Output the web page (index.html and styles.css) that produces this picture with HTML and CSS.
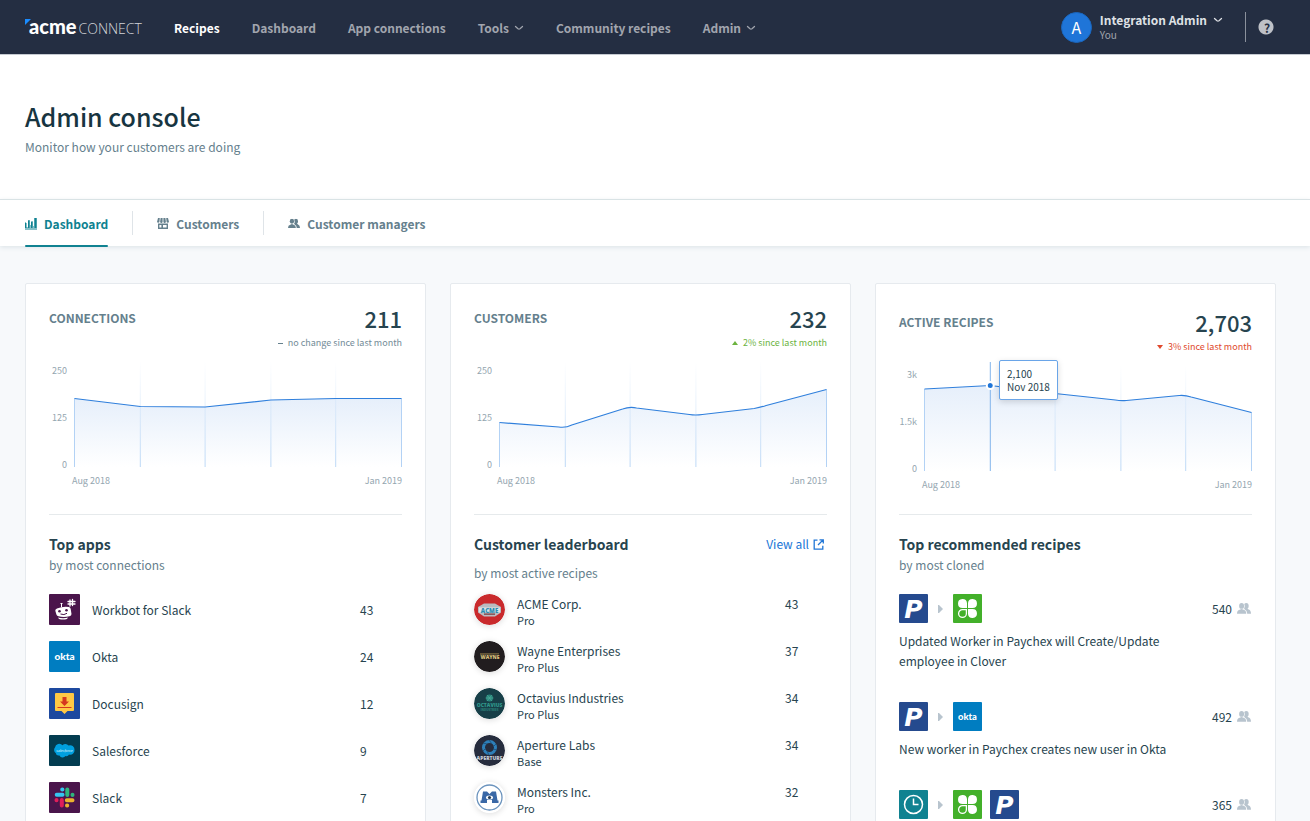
FILE: index.html
```html
<!DOCTYPE html>
<html lang="en">
<head>
<meta charset="utf-8">
<title>Admin console</title>
<link rel="stylesheet" href="styles.css">
</head>
<body>
<svg class="defs" aria-hidden="true">
  <defs>
    <linearGradient id="area" x1="0" y1="0" x2="0" y2="1">
      <stop offset="0" stop-color="#e6effb"/>
      <stop offset="1" stop-color="#ffffff"/>
    </linearGradient>
    <linearGradient id="grid" gradientUnits="userSpaceOnUse" x1="0" y1="4" x2="0" y2="110">
      <stop offset="0" stop-color="#c9dff7" stop-opacity="0"/>
      <stop offset="1" stop-color="#bcd8f6"/>
    </linearGradient>
    <symbol id="chevron" viewBox="0 0 10 6"><path d="M1.500 1.500 4 3.700q1 .7 2 0L8.500 1.500" fill="none" stroke="currentColor" stroke-width="1.3" stroke-linecap="round"/></symbol>
    <symbol id="people" viewBox="0 0 14 11">
      <ellipse cx="4.6" cy="2.9" rx="2.5" ry="2.9"/><path d="M0 10.8q0-3.4 2.6-4l2-.9 2 .9q2.600.6 2.600 4z"/>
      <path d="M7.200.9q.9-.9 2-.9 2.500 0 2.500 2.900 0 2-1.200 2.800l1.200.9Q14 7.400 14 10.800h-3.800q0-3.200-2.700-4.500L7.100 5.700q1.600-2.400.1-4.800z"/>
    </symbol>
    <symbol id="okta" viewBox="0 0 31 31">
      <rect width="31" height="31" rx="1" fill="#007dc1"/>
      <text x="15.500" y="19" class="okta-text">okta</text>
    </symbol>
    <symbol id="paychex" viewBox="0 0 29 29">
      <rect width="29" height="29" rx="1" fill="#254a8e"/>
      <text x="14.500" y="23.500" class="paychex-text">P</text>
    </symbol>
    <symbol id="clover" viewBox="0 0 29 29">
      <rect width="29" height="29" rx="1" fill="#43b02a"/>
      <g fill="#fff">
        <path d="M14 14V9a4.500 4.500 0 1 0-4.500 5z"/>
        <path d="M15 14V9a4.500 4.500 0 1 1 4.500 5z"/>
        <path d="M15 15v5a4.500 4.500 0 1 0 4.500-5z"/>
      </g>
      <path d="M13.400 15.600V19.500a3.900 3.900 0 1 1-3.900-3.900z" fill="none" stroke="#fff" stroke-width="1.300"/>
    </symbol>
    <symbol id="clock" viewBox="0 0 29 29">
      <rect width="29" height="29" rx="1" fill="#108291"/>
      <circle cx="14.500" cy="14.500" r="9" fill="none" stroke="#fff" stroke-width="1.500"/>
      <path d="M14.500 8.500v6h5" fill="none" stroke="#fff" stroke-width="1.500"/>
    </symbol>
    <symbol id="arrow" viewBox="0 0 5 8"><path d="M0 0h1l4 4-4 4H0z" fill="#b8c4ce"/></symbol>
  </defs>
</svg>

<header class="topbar">
  <a class="logo" href="#">
    <svg class="logo-mark" viewBox="0 0 6 6"><path d="M0 0h6L3.800 2.200 0 6z" fill="#1a8cff"/></svg>
    <span class="logo-acme">acme</span><span class="logo-connect">CONNECT</span>
  </a>
  <nav class="nav">
    <a class="nav-link current" href="#">Recipes</a>
    <a class="nav-link" href="#">Dashboard</a>
    <a class="nav-link" href="#">App connections</a>
    <a class="nav-link" href="#">Tools <svg class="chevron"><use href="#chevron"/></svg></a>
    <a class="nav-link" href="#">Community recipes</a>
    <a class="nav-link" href="#">Admin <svg class="chevron"><use href="#chevron"/></svg></a>
  </nav>
  <button class="account" type="button">
    <span class="avatar">A</span>
    <span class="account-text">
      <span class="account-name">Integration Admin <svg class="chevron"><use href="#chevron"/></svg></span>
      <span class="account-sub">You</span>
    </span>
  </button>
  <button class="help" type="button" aria-label="Help">?</button>
</header>

<section class="intro">
  <h1 class="page-title">Admin console</h1>
  <p class="page-sub">Monitor how your customers are doing</p>
</section>

<nav class="tabs">
  <a class="tab active" href="#">
    <svg class="tab-icon" viewBox="0 0 12 12" fill="currentColor"><path opacity=".5" d="M0 4h1v5h2V2h2v5h1V3h2v5h1V0h3v12H0z"/><path d="M0 5h1.500v5H0zM3 2.500h1.500V10H3zM6 4h1.500v6H6zM9.500 0H11.500v10h-2z"/></svg>
    Dashboard
  </a>
  <a class="tab" href="#">
    <svg class="tab-icon" viewBox="0 0 12 12" fill="currentColor"><path d="M1 0h1.800L2.400 4a1.300 1.300 0 0 1-2.400 0zM3.600 0h2v4a1.300 1.300 0 0 1-2.500 0zM6.400 0h2L8.900 4a1.300 1.300 0 0 1-2.500 0zM9.200 0H11l1 4a1.300 1.300 0 0 1-2.400 0z"/><path fill-rule="evenodd" d="M1 5.500h10V11H1zM2.400 7v2.500h2V7zM6 7v2.500h3.600V7z"/></svg>
    Customers
  </a>
  <a class="tab" href="#">
    <svg class="tab-icon" fill="currentColor" viewBox="0 0 14 12"><use href="#people" width="14" height="11"/></svg>
    Customer managers
  </a>
</nav>

<main class="cards">
  <section class="card">
    <header class="metric">
      <h2 class="metric-name">CONNECTIONS</h2>
      <div class="metric-value">
        <strong class="metric-number">211</strong>
        <span class="trend"><span class="dash"></span>no change since last month</span>
      </div>
    </header>
    <div class="chart">
      <div class="y-axis"><span>250</span><span>125</span><span>0</span></div>
      <svg class="plot" viewBox="0 0 329 110" preserveAspectRatio="none">
        <path d="M.5 41.500 66.500 49.500 131.500 50 197.500 43 262.500 41.500H328.500V110H.5z" fill="url(#area)"/>
        <path class="gridline" d="M66.500 4V110M131.500 4V110M197.500 4V110M262.500 4V110"/>
        <path class="edge" d="M.5 41.500V110M328.500 41.500V110"/>
        <path class="series" d="M.5 41.500 66.500 49.500 131.500 50 197.500 43 262.500 41.500H328.500"/>
      </svg>
      <div class="x-axis"><span>Aug 2018</span><span>Jan 2019</span></div>
    </div>
    <div class="list-head"><h3 class="list-title">Top apps</h3></div>
    <p class="list-sub">by most connections</p>
    <ul class="rows">
      <li class="row">
        <svg class="app-icon" viewBox="0 0 31 31">
          <rect width="31" height="31" rx="1" fill="#4a154b"/>
          <path d="M21 6v6M23.500 5.500v6M19 7.500h7M19 10h7" stroke="#fff" stroke-width="1.300" stroke-linecap="round"/>
          <path d="M12.500 13V9.500M11.500 9.500h2" stroke="#fff"/>
          <path d="M8 14.500q6-2.500 12-1.500 1.500.3 1.700 2l.8 5q0 1.800-2 2.200-5.500 1.300-11 .1-1.500-.2-2-1.500l-1.200-4q-.2-1.600 1.700-2.300zM9 23.500q5 1.300 10 0l-1 1.500q-4 1-8 0z" fill="#fff"/>
          <circle cx="10.500" cy="17.200" r="1.300" fill="#4a154b"/><circle cx="17.500" cy="16.200" r="1.300" fill="#4a154b"/>
          <path d="M11.500 20q3.500 1.500 6.500-.7" fill="none" stroke="#4a154b"/>
        </svg>
        <span class="row-name">Workbot for Slack</span><span class="row-count">43</span>
      </li>
      <li class="row">
        <svg class="app-icon"><use href="#okta"/></svg>
        <span class="row-name">Okta</span><span class="row-count">24</span>
      </li>
      <li class="row">
        <svg class="app-icon" viewBox="0 0 31 31">
          <rect width="31" height="31" rx="1" fill="#1d499f"/>
          <path d="M7 5h17q1 0 1 1v16q0 1-1 1h-5.500l-3 3-3-3H7q-1 0-1-1V6q0-1 1-1z" fill="#ffc845"/>
          <path d="M13.500 9h4v4.500h2.500L15.500 18 11 13.500h2.500zM8.500 19h14v1h-14z" fill="#d5371f"/>
        </svg>
        <span class="row-name">Docusign</span><span class="row-count">12</span>
      </li>
      <li class="row">
        <svg class="app-icon" viewBox="0 0 31 31">
          <rect width="31" height="31" rx="1" fill="#033c50"/>
          <path d="M13.500 10.300a4 4 0 0 1 6 .2 4.400 4.400 0 0 1 6 4.500 4.200 4.200 0 0 1-5.500 4.500 3 3 0 0 1-3.500 1.500 3.500 3.500 0 0 1-6-.5 3.200 3.200 0 0 1-3.800-2.500 3.700 3.700 0 0 1-.7-5.500A4.300 4.300 0 0 1 13.500 10.300z" fill="#009fdf"/>
          <text x="15.500" y="16.500" class="salesforce-text">salesforce</text>
        </svg>
        <span class="row-name">Salesforce</span><span class="row-count">9</span>
      </li>
      <li class="row">
        <svg class="app-icon" viewBox="0 0 31 31">
          <rect width="31" height="31" rx="1" fill="#4a154b"/>
          <g stroke-width="4" stroke-linecap="round">
            <path d="M7.700 12.800h5.800M13.200 7.500h.2" stroke="#36c5f0"/>
            <path d="M18.300 7.500v5.500M23.500 12.700v.2" stroke="#2eb67d"/>
            <path d="M17.800 18.200h5.700M18 23.500h.2" stroke="#ecb22e"/>
            <path d="M12.800 18v5.500M7.500 18v.2" stroke="#e01e5a"/>
          </g>
        </svg>
        <span class="row-name">Slack</span><span class="row-count">7</span>
      </li>
    </ul>
  </section>

  <section class="card">
    <header class="metric">
      <h2 class="metric-name">CUSTOMERS</h2>
      <div class="metric-value">
        <strong class="metric-number">232</strong>
        <span class="trend up"><svg class="triangle" viewBox="0 0 6 4"><path d="M0 4h6L3 0z" fill="currentColor"/></svg>2% since last month</span>
      </div>
    </header>
    <div class="chart">
      <div class="y-axis"><span>250</span><span>125</span><span>0</span></div>
      <svg class="plot" viewBox="0 0 329 110" preserveAspectRatio="none">
        <path d="M.5 65.500 60 70Q67 71 73 68L124 52Q131 49.500 138 51L191 57.500Q197 58.500 204 57.500L256 51.500Q262 50.500 268 48.500L328.500 32.500V110H.5z" fill="url(#area)"/>
        <path class="gridline" d="M66.500 4V110M131.500 4V110M197.500 4V110M262.500 4V110"/>
        <path class="edge" d="M.5 65.500V110M328.500 32.500V110"/>
        <path class="series" d="M.5 65.500 60 70Q67 71 73 68L124 52Q131 49.500 138 51L191 57.500Q197 58.500 204 57.500L256 51.500Q262 50.500 268 48.500L328.500 32.500"/>
      </svg>
      <div class="x-axis"><span>Aug 2018</span><span>Jan 2019</span></div>
    </div>
    <div class="list-head">
      <h3 class="list-title">Customer leaderboard</h3>
      <a class="view-all" href="#">View all
        <svg class="external" viewBox="0 0 11 11" fill="none" stroke="currentColor" stroke-width="1.300"><path d="M4.500 1.200H1.200v8.900h8.600V6.800M6.500.8h3.800v3.700M10 1 5 6"/></svg>
      </a>
    </div>
    <p class="list-sub spaced">by most active recipes</p>
    <ul class="rows leaderboard">
      <li class="row">
        <svg class="company-icon" viewBox="0 0 31 31">
          <circle cx="15.500" cy="15.500" r="15.500" fill="#c92a2c"/>
          <path d="M10 9.500h11l6 3.500v5.500L21 22.500H10l-6-4v-5.500z" fill="#b9bcc0"/>
          <path d="M5 13.500h21v5H5z" fill="#dfe4e6"/>
          <path d="M10 19.500h11v1.300H10z" fill="#7c3a3e"/>
          <text x="15.500" y="18.500" class="mark-text acme-mark">ACME</text>
        </svg>
        <span class="row-name">ACME Corp.<small class="plan">Pro</small></span><span class="row-count">43</span>
      </li>
      <li class="row">
        <svg class="company-icon" viewBox="0 0 31 31">
          <circle cx="15.500" cy="15.500" r="15.500" fill="#211d1f"/>
          <path d="M6 12.500h19v.8L6 13.600z" fill="#a68e52"/>
          <text x="16" y="17.800" class="mark-text wayne-mark">WAYNE</text>
        </svg>
        <span class="row-name">Wayne Enterprises<small class="plan">Pro Plus</small></span><span class="row-count">37</span>
      </li>
      <li class="row">
        <svg class="company-icon" viewBox="0 0 31 31">
          <circle cx="15.500" cy="15.500" r="15.500" fill="#173f48"/>
          <circle cx="15.500" cy="10" r="3.500" fill="#27857b"/>
          <path d="M13 7l5 6M18 7l-5 6M11.500 10h8" stroke="#55b3a0" stroke-width=".6"/>
          <text x="15.500" y="19" class="mark-text octavius-mark">OCTAVIUS</text>
          <text x="15.500" y="22.500" class="mark-text octavius-small">INDUSTRIES</text>
        </svg>
        <span class="row-name">Octavius Industries<small class="plan">Pro Plus</small></span><span class="row-count">34</span>
      </li>
      <li class="row">
        <svg class="company-icon" viewBox="0 0 31 31">
          <circle cx="15.500" cy="15.500" r="15.500" fill="#262c3d"/>
          <circle cx="15.500" cy="12.500" r="6" fill="none" stroke="#2d7fb9" stroke-width="3"/>
          <path d="M15 5l3 4M22 9l-3 3M23 15l-4-1M15 20l-2-4M9 16l3-3M9 8l4 1" stroke="#1d4a70" stroke-width=".8"/>
          <text x="15.500" y="25" class="mark-text aperture-mark">APERTURE</text>
        </svg>
        <span class="row-name">Aperture Labs<small class="plan">Base</small></span><span class="row-count">34</span>
      </li>
      <li class="row">
        <svg class="company-icon" viewBox="0 0 31 31">
          <circle cx="15.500" cy="15.500" r="15.500" fill="#fff"/>
          <circle cx="15.500" cy="15.500" r="12.500" fill="none" stroke="#6b93bd" stroke-width="1.300"/>
          <path d="M9 9.500h4l2.500 2.500L18 9.500h4l1.500 9h1V21H18v-3h-5v3H6.500v-2.500h1z" fill="#3a68a6"/>
          <ellipse cx="15.500" cy="15.500" rx="3.500" ry="2" fill="#fff"/><circle cx="15.500" cy="15.500" r="1.600" fill="#263b54"/>
        </svg>
        <span class="row-name">Monsters Inc.<small class="plan">Pro</small></span><span class="row-count">32</span>
      </li>
    </ul>
  </section>

  <section class="card">
    <header class="metric lowered">
      <h2 class="metric-name">ACTIVE RECIPES</h2>
      <div class="metric-value">
        <strong class="metric-number">2,703</strong>
        <span class="trend down"><svg class="triangle" viewBox="0 0 6 4"><path d="M0 0h6L3 4z" fill="currentColor"/></svg>3% since last month</span>
      </div>
    </header>
    <div class="chart raised">
      <div class="y-axis"><span>3k</span><span>1.5k</span><span>0</span></div>
      <svg class="plot" viewBox="0 0 329 110" preserveAspectRatio="none">
        <path d="M.5 28 66.500 24.500 131.500 32.500 192 39Q197 40 203 39.500L256 34.500Q262 34 268 36L328.500 51.500V110H.5z" fill="url(#area)"/>
        <path class="gridline" d="M131.500 4V110M197.500 4V110M262.500 4V110"/>
        <path class="edge" d="M.5 28V110M328.500 51.500V110"/>
        <path class="cursor" d="M66.500 1V110"/>
        <path class="series" d="M.5 28 66.500 24.500 131.500 32.500 192 39Q197 40 203 39.500L256 34.500Q262 34 268 36L328.500 51.500"/>
        <circle cx="66.500" cy="24.500" r="3.500" fill="#1f75d8" stroke="#fff" stroke-width="2"/>
      </svg>
      <div class="x-axis"><span>Aug 2018</span><span>Jan 2019</span></div>
      <div class="tooltip"><span>2,100</span><span>Nov 2018</span></div>
    </div>
    <div class="list-head"><h3 class="list-title">Top recommended recipes</h3></div>
    <p class="list-sub">by most cloned</p>
    <ul class="recipes">
      <li class="recipe">
        <div class="recipe-head">
          <svg class="recipe-icon"><use href="#paychex"/></svg>
          <svg class="arrow"><use href="#arrow"/></svg>
          <svg class="recipe-icon"><use href="#clover"/></svg>
          <span class="clones">540 <svg class="people"><use href="#people"/></svg></span>
        </div>
        <p class="recipe-name">Updated Worker in Paychex will Create/Update employee in Clover</p>
      </li>
      <li class="recipe">
        <div class="recipe-head">
          <svg class="recipe-icon"><use href="#paychex"/></svg>
          <svg class="arrow"><use href="#arrow"/></svg>
          <svg class="recipe-icon"><use href="#okta"/></svg>
          <span class="clones">492 <svg class="people"><use href="#people"/></svg></span>
        </div>
        <p class="recipe-name">New worker in Paychex creates new user in Okta</p>
      </li>
      <li class="recipe">
        <div class="recipe-head">
          <svg class="recipe-icon"><use href="#clock"/></svg>
          <svg class="arrow"><use href="#arrow"/></svg>
          <svg class="recipe-icon"><use href="#clover"/></svg>
          <svg class="recipe-icon"><use href="#paychex"/></svg>
          <span class="clones">365 <svg class="people"><use href="#people"/></svg></span>
        </div>
      </li>
    </ul>
  </section>
</main>
</body>
</html>
```
FILE: styles.css
```css
* {
  box-sizing: border-box;
}

body {
  margin: 0;
  background: #f7f9fb;
  color: #27444f;
  font-family: "Noto Sans CJK SC", "Noto Sans", sans-serif;
  font-size: 12px;
  line-height: 20px;
}

h1, h2, h3, p, ul {
  margin: 0;
  padding: 0;
}

ul {
  list-style: none;
}

a {
  color: inherit;
  text-decoration: none;
}

svg {
  display: block;
  flex: none;
}

button {
  padding: 0;
  border: 0;
  background: none;
  color: inherit;
  font: inherit;
  cursor: pointer;
}

.defs {
  position: absolute;
  width: 0;
  height: 0;
}

/* Top bar */
.topbar {
  display: flex;
  align-items: center;
  height: 54px;
  padding: 0 36px 0 25px;
  background: #242e42;
  color: #a1a5ae;
}

.logo {
  display: flex;
  align-items: baseline;
  width: 149px;
  color: #fff;
}

.logo-mark {
  width: 6px;
  height: 6px;
  align-self: flex-start;
  margin: 5px -2px 0 0;
}

.logo-acme {
  font: 900 20px/24px Lato, sans-serif;
}

.logo-connect {
  margin-left: 2px;
  color: #d3d5d9;
  font: 300 14px/24px "Open Sans", sans-serif;
}

.nav {
  display: flex;
  flex: 1;
  gap: 32px;
  padding-top: 2px;
}

.nav-link {
  display: flex;
  align-items: center;
  gap: 5px;
  font-weight: 700;
  white-space: nowrap;
}

.nav-link.current {
  color: #fff;
}

.chevron {
  width: 10px;
  height: 6px;
}

.account {
  display: flex;
  align-items: center;
  gap: 8px;
  padding-right: 22px;
  text-align: left;
}

.avatar {
  width: 31px;
  height: 31px;
  border: 1px solid #1a66bd;
  border-radius: 50%;
  background: #1f75d8;
  color: #fff;
  font-size: 16px;
  line-height: 29px;
  text-align: center;
}

.account-text {
  display: flex;
  flex-direction: column;
}

.account-name {
  display: flex;
  align-items: center;
  gap: 6px;
  color: #dfe1e5;
  font-weight: 700;
  line-height: 16px;
}

.account-sub {
  font-size: 10px;
  line-height: 14px;
}

.help {
  display: flex;
  align-items: center;
  width: 29px;
  height: 30px;
  padding: 0 5px 0 18px;
  border-left: 1px solid #8b919c;
  background: radial-gradient(circle at calc(100% - 8px) 50%, #bec1c7 7px, transparent 8px);
  color: #242e42;
  font-size: 12px;
  font-weight: 700;
  line-height: 15px;
}

/* Page intro */
.intro {
  padding: 42px 25px 41px;
  border-top: 1px solid #c5cad1;
  border-bottom: 1px solid #dae3e5;
  background: #fff;
}

.page-title {
  color: #173541;
  font-size: 25px;
  font-weight: 500;
  line-height: 38px;
}

.page-sub {
  margin-top: 1px;
  color: #65808d;
  line-height: 22px;
}

/* Tabs */
.tabs {
  display: flex;
  align-items: center;
  height: 46px;
  padding: 0 25px;
  background: #fff;
  box-shadow: 0 1px 5px #d9e1e5;
  color: #65808d;
  font-weight: 700;
}

.tab {
  position: relative;
  display: flex;
  align-items: center;
  gap: 7px;
  height: 24px;
  margin-right: 24px;
  padding-top: 2px;
}

.tab + .tab {
  padding-left: 24px;
  border-left: 1px solid #dfe4e8;
}

.tab.active {
  color: #108291;
}

.tab.active::after {
  content: "";
  position: absolute;
  right: 0;
  bottom: -12px;
  left: 0;
  height: 2px;
  border-radius: 1px;
  background: #108291;
}

.tab-icon {
  width: 12px;
  height: 12px;
}

/* Cards */
.cards {
  display: grid;
  grid-template-columns: repeat(3, 1fr);
  gap: 24px;
  padding: 37px 34px 24px 25px;
}

.card {
  min-width: 0;
  padding: 22px 23px;
  border: 1px solid #e6eaee;
  border-radius: 2px;
  background: #fff;
}

.metric {
  display: flex;
  justify-content: space-between;
  height: 44px;
}

.metric.lowered {
  height: 48px;
  padding-top: 4px;
}

.metric-name {
  color: #65808d;
  font-size: 12px;
  font-weight: 700;
  line-height: 24px;
}

.metric-value {
  display: flex;
  flex-direction: column;
  align-items: flex-end;
  gap: 4px;
}

.metric-number {
  font-size: 22px;
  font-weight: 500;
  line-height: 24px;
}

.trend {
  display: flex;
  align-items: center;
  gap: 5px;
  color: #738b98;
  font-size: 9px;
  line-height: 18px;
}

.trend.up {
  color: #6cb33f;
}

.trend.down {
  color: #e0492e;
}

.dash {
  width: 5px;
  height: 1px;
  background: #65808d;
}

.triangle {
  width: 6px;
  height: 4px;
}

/* Charts */
.chart {
  position: relative;
  display: grid;
  grid-template-columns: 18px 1fr;
  grid-template-rows: 118px 26px;
  column-gap: 7px;
  height: 165px;
  margin-bottom: 18px;
  padding-top: 7px;
  border-bottom: 1px solid #e6eaec;
  color: #94a6b0;
  font-size: 9px;
}

.chart.raised {
  height: 161px;
}

.y-axis {
  display: flex;
  flex-direction: column;
  justify-content: space-between;
  align-self: start;
  height: 106px;
  margin-top: 8px;
  text-align: right;
  line-height: 12px;
}

.plot {
  width: 100%;
  height: 110px;
  overflow: visible;
}

.plot path {
  vector-effect: non-scaling-stroke;
}

.gridline {
  stroke: url(#grid);
}

.edge {
  stroke: #b3d2f5;
}

.cursor {
  stroke: #82b4ec;
}

.series {
  fill: none;
  stroke: #2f7fdc;
  stroke-width: 1.2;
}

.x-axis {
  display: flex;
  grid-column: 2;
  justify-content: space-between;
  margin-left: -2px;
  line-height: 12px;
}

.tooltip {
  position: absolute;
  top: 6px;
  left: 100px;
  display: flex;
  flex-direction: column;
  padding: 6px 7px;
  border: 1px solid #6aa5e8;
  border-radius: 2px;
  background: #fff;
  box-shadow: 0 2px 6px #00000026;
  color: #27444f;
  font-size: 10px;
  line-height: 13px;
  white-space: nowrap;
}

/* Lists */
.list-head {
  display: flex;
  justify-content: space-between;
  line-height: 22px;
}

.list-title {
  font-size: 14px;
  font-weight: 700;
}

.list-sub {
  margin-bottom: 19px;
  color: #65808d;
  line-height: 20px;
}

.list-sub.spaced {
  margin-top: 8px;
  margin-bottom: 11px;
}

.view-all {
  display: flex;
  align-items: center;
  gap: 4px;
  margin-right: 3px;
  color: #2076d6;
}

.external {
  width: 11px;
  height: 11px;
}

.rows {
  display: flex;
  flex-direction: column;
  gap: 16px;
}

.row {
  display: flex;
  align-items: center;
  gap: 12px;
  height: 31px;
}

.app-icon {
  width: 31px;
  height: 31px;
}

.company-icon {
  width: 31px;
  height: 31px;
  border-radius: 50%;
  box-shadow: 0 1px 6px #00000024;
}

.row-name {
  flex: 1;
  line-height: 16px;
}

.row-count {
  width: 42px;
  line-height: 16px;
}

.leaderboard .row-name,
.leaderboard .row-count {
  align-self: flex-start;
  padding-top: 2px;
}

.plan {
  display: block;
  font-size: 11px;
  line-height: 16px;
}

/* Recipes */
.recipes {
  display: flex;
  flex-direction: column;
  gap: 31px;
}

.recipe-head {
  display: flex;
  align-items: center;
  gap: 8px;
}

.recipe-icon {
  width: 29px;
  height: 29px;
}

.arrow {
  width: 5px;
  height: 8px;
  margin: 0 2px;
}

.clones {
  display: flex;
  align-items: center;
  gap: 5px;
  margin-left: auto;
  margin-right: 1px;
}

.people {
  width: 14px;
  height: 11px;
  fill: #b8c4ce;
}

.recipe-name {
  max-width: 280px;
  margin-top: 8px;
}

/* Lettering inside marks */
.okta-text {
  fill: #fff;
  font: 900 10px Lato, sans-serif;
  text-anchor: middle;
}

.paychex-text {
  fill: #fff;
  font: italic 700 25px "DejaVu Sans", sans-serif;
  text-anchor: middle;
}

.salesforce-text {
  fill: #d9f2fc;
  font: italic 4px Lato, sans-serif;
  text-anchor: middle;
}

.mark-text {
  font-family: "Open Sans", sans-serif;
  font-weight: 800;
  text-anchor: middle;
}

.acme-mark {
  fill: #2a8db0;
  font-size: 6px;
}

.wayne-mark {
  fill: #d8bf7b;
  font-size: 5px;
}

.octavius-mark {
  fill: #2f968a;
  font-size: 5px;
}

.octavius-small {
  fill: #2b7c76;
  font-size: 3px;
}

.aperture-mark {
  fill: #c9ced6;
  font-size: 5px;
}
```
